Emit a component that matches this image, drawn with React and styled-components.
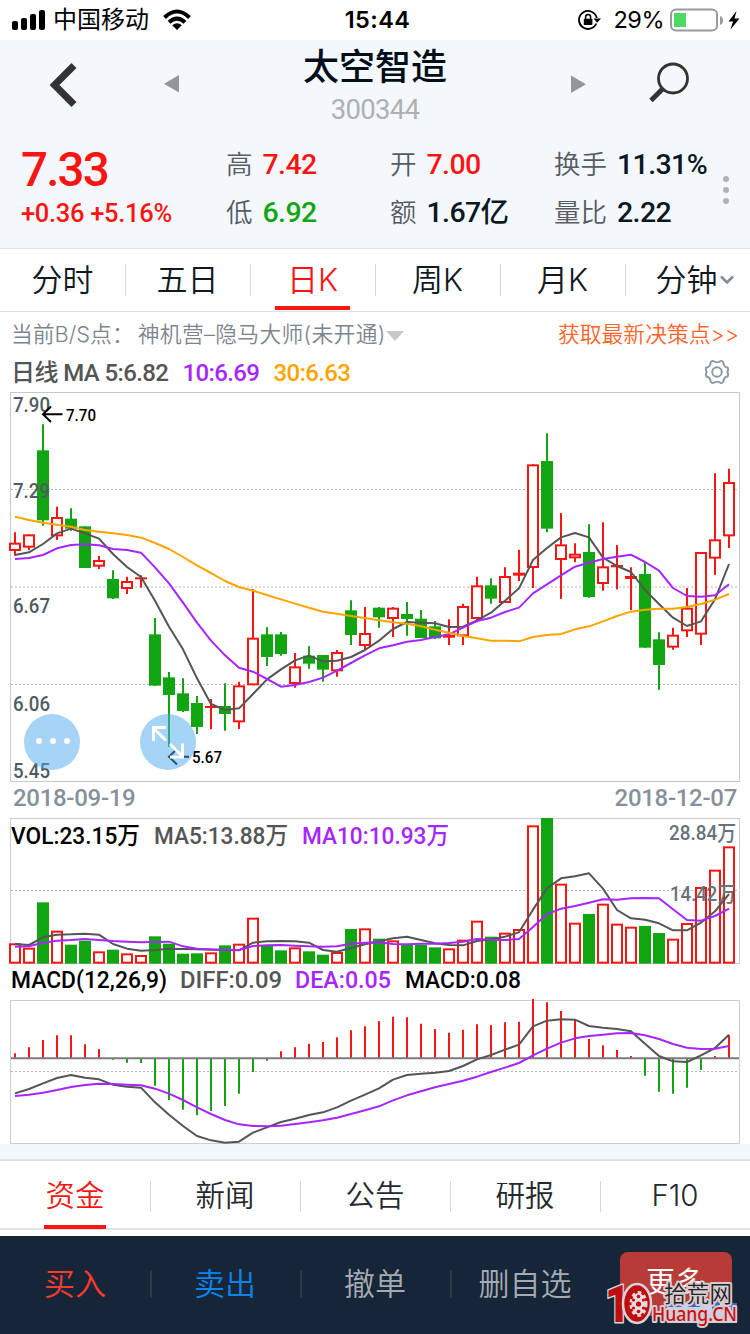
import React from "react";
import styled, { createGlobalStyle } from "styled-components";

const RED = "#f81612";
const GREEN = "#12a512";
const PURPLE = "#a626ff";
const ORANGE = "#ffa300";
const GREY = "#555";
const DIN = `Roboto, "Noto Sans CJK SC", sans-serif`;

const GlobalStyle = createGlobalStyle`
  * {
    box-sizing: border-box;
    margin: 0;
    padding: 0;
  }
  body {
    width: 750px;
    height: 1334px;
    overflow: hidden;
    background: #fff;
    font-family: Inter, "Noto Sans CJK SC", sans-serif;
    line-height: 1.2;
    color: #101923;
  }
  svg {
    display: block;
    flex-shrink: 0;
  }
`;

const Page = styled.div`
  position: relative;
  display: flex;
  flex-direction: column;
  width: 750px;
  height: 1334px;
  overflow: hidden;
`;

const StatusBar = styled.div`
  display: grid;
  grid-template-columns: 1fr auto 1fr;
  align-items: center;
  height: 40px;
  padding: 0 9px 0 12px;
  color: #000;
  font-size: 24px;
`;

const StatusSide = styled.div`
  display: flex;
  align-items: center;
  justify-content: ${(p) => (p.$end ? "flex-end" : "flex-start")};
`;

const Carrier = styled.span`
  margin: 0 13px 0 7px;
  font-weight: 400;
`;

const Clock = styled.span`
  font-weight: 600;
  font-size: 23.5px;
  letter-spacing: 0.4px;
  padding-left: 2px;
`;

const Percent = styled.span`
  margin: 0 6px 0 13px;
  font-size: 23.5px;
  letter-spacing: -0.5px;
`;

const Header = styled.header`
  height: 209px;
  background: #f4f8fc;
  border-bottom: 1px solid #dfe5ea;
`;

const TitleRow = styled.div`
  display: grid;
  grid-template-columns: 164px 422px 164px;
  height: 88px;
`;

const TitleCenter = styled.div`
  display: flex;
  justify-content: space-between;
`;

const TitleText = styled.div`
  text-align: center;
`;

const StockName = styled.h1`
  height: 54px;
  line-height: 54px;
  font-size: 36px;
  font-weight: 500;
  color: #020f1b;
`;

const StockCode = styled.div`
  height: 30px;
  line-height: 31px;
  font-family: ${DIN};
  font-size: 27.5px;
  letter-spacing: -0.7px;
  color: #adb1b5;
`;

const QuoteRow = styled.div`
  display: grid;
  grid-template-columns: 205px 164px 164px 161px 1fr;
  height: 100px;
  padding-left: 21px;
  margin-top: 13px;
`;

const PriceBlock = styled.div`
  padding-top: 1px;
  color: ${RED};
  font-family: ${DIN};
`;

const Price = styled.div`
  height: 56px;
  line-height: 56px;
  font-size: 47.5px;
  font-weight: 500;
  letter-spacing: -1.8px;
`;

const Change = styled.div`
  height: 32px;
  line-height: 31px;
  font-size: 25.5px;
  font-weight: 500;
  letter-spacing: -0.3px;
`;

const QuoteColumn = styled.div`
  display: grid;
  grid-template-rows: 48px 48px;
`;

const Quote = styled.div`
  display: flex;
  align-items: center;
  white-space: nowrap;
`;

const QuoteLabel = styled.span`
  margin-right: 10px;
  font-size: 26.5px;
  font-weight: 350;
  color: #555c64;
`;

const QuoteValue = styled.span`
  font-family: ${DIN};
  font-size: 28.5px;
  font-weight: 500;
  letter-spacing: -0.6px;
  color: ${(p) => p.$color || "#0a1824"};
`;

const MoreDots = styled.div`
  display: flex;
  flex-direction: column;
  gap: 5px;
  padding: 35px 0 0 8px;
  i {
    width: 6px;
    height: 6px;
    border-radius: 50%;
    background: #abb2b8;
  }
`;

const Tabs = styled.nav`
  display: grid;
  grid-template-columns: repeat(6, 125px);
  height: 63px;
  border-bottom: 1px solid #dfe1e3;
`;

const Tab = styled.div`
  display: flex;
  align-items: center;
  justify-content: center;
  height: 62px;
  font-size: 31px;
  font-weight: 350;
  color: ${(p) => (p.$active ? RED : "#101923")};
  background:
    linear-gradient(${RED}, ${RED}) 50% 57px / ${(p) => (p.$active ? "75px 4px" : "0 0")} no-repeat,
    linear-gradient(#d5d9dd, #d5d9dd) 0 15px / ${(p) => (p.$first ? "0 0" : "1px 32px")} no-repeat;
  svg {
    margin: 0 -14px 0 2px;
  }
`;

const SignalRow = styled.div`
  display: flex;
  align-items: center;
  height: 44px;
  padding: 0 11px;
  font-size: 21.8px;
  font-weight: 350;
  color: #7c858d;
  white-space: nowrap;
  svg {
    margin-top: 4px;
  }
`;

const SignalName = styled.span`
  margin-left: 4px;
  letter-spacing: 0.3px;
`;

const SignalLink = styled.span`
  margin-left: auto;
  font-weight: 350;
  color: #ff6429;
`;

const AverageRow = styled.div`
  display: flex;
  align-items: center;
  height: 34px;
  padding: 0 20px 0 11px;
  font-family: ${DIN};
  font-size: 24px;
  font-weight: 500;
  svg {
    margin: 0 0 2px auto;
  }
`;

const Average = styled.span`
  margin-right: 14px;
  letter-spacing: -0.6px;
  color: ${(p) => p.$color};
`;

const ChartArea = styled.div`
  position: relative;
  height: 393px;
`;

const FloatButton = styled.div`
  position: absolute;
  left: ${(p) => p.$left}px;
  top: 324px;
  width: 56px;
  height: 56px;
  border-radius: 50%;
  background: rgba(77, 169, 237, 0.5);
`;

const DateRow = styled.div`
  display: flex;
  justify-content: space-between;
  height: 34px;
  line-height: 30px;
  padding: 0 13px;
  font-family: ${DIN};
  font-size: 24px;
  font-weight: 500;
  color: #87919a;
  letter-spacing: -0.3px;
`;

const Gap = styled.div`
  height: 17px;
  background: #f4f8fb;
  border-bottom: 2px solid #dfe4e8;
`;

const InfoTabs = styled.nav`
  display: grid;
  grid-template-columns: repeat(5, 150px);
  height: 69px;
  border-bottom: 2px solid #dfe4e8;
`;

const InfoTab = styled.div`
  display: flex;
  align-items: center;
  justify-content: center;
  height: 69px;
  font-size: 29.5px;
  font-weight: 350;
  color: ${(p) => (p.$active ? RED : "#25292e")};
  background:
    linear-gradient(${RED}, ${RED}) 50% 64px / ${(p) => (p.$active ? "62px 4px" : "0 0")} no-repeat,
    linear-gradient(#d5d9dd, #d5d9dd) 0 20px / ${(p) => (p.$first ? "0 0" : "1px 31px")} no-repeat;
`;

const TradeBar = styled.footer`
  display: grid;
  grid-template-columns: repeat(5, 150px);
  height: 98px;
  margin-top: 6px;
  background: #172538;
`;

const Trade = styled.div`
  display: flex;
  align-items: center;
  justify-content: center;
  padding-bottom: 2px;
  font-size: 31px;
  font-weight: 350;
  color: ${(p) => p.$color};
  background: linear-gradient(#2b394a, #2b394a) 0 34px / ${(p) => (p.$line ? "2px 28px" : "0 0")} no-repeat;
`;

const MoreButton = styled.div`
  width: 112px;
  height: 64px;
  margin: 16px 0 0 20px;
  padding-right: 2px;
  border-radius: 8px;
  background: #b93b37;
  color: #fff;
  font-size: 29px;
  line-height: 62px;
  text-align: center;
`;

const Watermark = styled.div`
  position: absolute;
  right: 5px;
  bottom: 0;
`;

// kind, high, body top, body bottom, low, volume top, macd end (thirds of a pixel)
const candles = [
  ["r", 427, 458, 483, 497, 490, 820], ["r", 433, 433, 473, 480, 503, 802], ["g", 103, 181, 391, 407, 367, 780],
  ["r", 350, 381, 439, 450, 452, 766], ["g", 355, 386, 416, 422, 494, 766], ["g", 409, 409, 534, 534, 482, 793],
  ["r", 498, 510, 530, 537, 514, 807], ["g", 541, 567, 625, 627, 509, 839], ["r", 560, 573, 597, 612, 520, 848],
  ["r", 556, 562, 568, 593, 525, 849], ["g", 684, 733, 887, 887, 469, 917], ["g", 846, 862, 915, 1070, 491, 960],
  ["g", 865, 910, 963, 966, 521, 989], ["g", 918, 939, 1011, 1032, 520, 1006], ["r", 927, 948, 954, 1018, 517, 993],
  ["g", 880, 948, 972, 1022, 496, 978], ["r", 875, 886, 997, 1017, 491, 941], ["r", 598, 743, 886, 886, 413, 876],
  ["g", 712, 733, 801, 828, 496, 842], ["g", 726, 733, 792, 797, 511, 814], ["r", 789, 829, 882, 893, 502, 802],
  ["g", 769, 797, 821, 836, 514, 791], ["g", 795, 795, 839, 875, 524, 786], ["r", 780, 786, 844, 860, 516, 772],
  ["g", 631, 661, 735, 765, 447, 751], ["r", 651, 729, 768, 779, 445, 739], ["g", 651, 653, 682, 713, 476, 723],
  ["r", 651, 653, 687, 741, 481, 710], ["g", 636, 672, 687, 737, 494, 712], ["g", 660, 686, 744, 744, 494, 731],
  ["g", 693, 709, 745, 747, 502, 747], ["r", 688, 735, 743, 765, 505, 758], ["r", 641, 648, 739, 765, 479, 749],
  ["r", 560, 586, 687, 697, 422, 733], ["g", 565, 586, 626, 641, 470, 735], ["r", 532, 558, 639, 639, 458, 727],
  ["r", 479, 548, 557, 573, 447, 725], ["r", 223, 223, 534, 594, 136, 657], ["g", 130, 213, 416, 427, 114, 667],
  ["r", 369, 463, 510, 627, 311, 693], ["r", 460, 491, 505, 517, 428, 720], ["g", 403, 486, 621, 623, 402, 777],
  ["r", 397, 529, 582, 602, 371, 796], ["r", 465, 525, 532, 598, 431, 810], ["r", 532, 558, 567, 660, 440, 828],
  ["g", 516, 552, 773, 773, 438, 887], ["g", 727, 748, 825, 899, 459, 935], ["r", 713, 734, 773, 779, 476, 941],
  ["r", 594, 653, 724, 741, 429, 923], ["r", 486, 486, 734, 765, 321, 870], ["r", 250, 448, 506, 555, 269, 828],
  ["r", 236, 276, 439, 474, 199, 766],
];

const ma5 = [495, 487, 462, 430, 416, 430, 446, 492, 531, 561, 632, 710, 778, 865, 942, 960, 955, 912, 868, 838, 811, 797, 814, 812, 801, 780, 752, 717, 696, 698, 700, 711, 710, 691, 668, 632, 595, 510, 474, 442, 429, 442, 503, 528, 546, 600, 642, 683, 708, 694, 628, 522];
const ma10 = [507, 504, 495, 475, 465, 463, 466, 477, 480, 488, 532, 580, 638, 698, 752, 796, 833, 845, 867, 890, 885, 876, 863, 842, 819, 796, 775, 766, 755, 750, 741, 733, 713, 693, 683, 666, 653, 610, 583, 556, 530, 518, 507, 500, 494, 516, 542, 594, 618, 620, 616, 583];
const ma30 = [380, 390, 398, 404, 410, 420, 425, 430, 435, 443, 459, 477, 501, 526, 549, 573, 591, 602, 615, 628, 641, 653, 665, 671, 678, 684, 691, 697, 701, 709, 719, 728, 738, 745, 752, 752, 754, 741, 735, 732, 718, 709, 694, 678, 665, 659, 656, 656, 651, 642, 629, 612];
const vol5 = [492, 495, 472, 464, 463, 461, 464, 492, 506, 512, 510, 506, 507, 508, 509, 510, 511, 488, 484, 483, 484, 488, 510, 515, 504, 493, 484, 475, 470, 480, 490, 495, 496, 483, 478, 470, 457, 389, 325, 295, 289, 280, 326, 390, 415, 419, 430, 451, 451, 428, 394, 342];
const vol10 = [500, 499, 488, 482, 480, 477, 480, 483, 485, 487, 486, 485, 499, 506, 508, 509, 510, 498, 496, 495, 497, 499, 500, 499, 491, 488, 487, 492, 493, 491, 491, 489, 485, 477, 479, 480, 477, 441, 403, 386, 378, 368, 358, 359, 355, 354, 355, 388, 420, 422, 408, 386];
const diff = [940, 927, 910, 894, 885, 893, 898, 914, 920, 923, 967, 1004, 1038, 1068, 1081, 1088, 1085, 1058, 1042, 1026, 1016, 1005, 997, 982, 962, 944, 925, 899, 885, 881, 878, 873, 858, 838, 825, 809, 794, 739, 722, 718, 719, 738, 743, 747, 754, 791, 828, 844, 846, 826, 804, 764];
const dea = [948, 944, 938, 930, 921, 915, 911, 912, 914, 916, 926, 941, 960, 982, 1002, 1020, 1033, 1038, 1039, 1037, 1032, 1027, 1021, 1013, 1002, 991, 979, 961, 946, 934, 922, 912, 902, 890, 876, 863, 849, 826, 806, 788, 775, 768, 764, 760, 759, 766, 777, 792, 803, 807, 806, 798];

const px = (i) => 15 + 14 * i;

const Curve = ({ data, color }) => (
  <polyline
    points={data.map((v, i) => `${px(i)},${v / 3}`).join(" ")}
    fill="none"
    stroke={color}
    strokeWidth="2"
    strokeLinejoin="round"
  />
);

const Bar = ({ kind, i, top, bottom }) => {
  const y = top / 3;
  const h = (bottom - top) / 3;
  if (kind === "g") return <rect x={px(i) - 6} y={y} width="12" height={h} fill={GREEN} />;
  if (h < 4) return <rect x={px(i) - 6} y={y} width="12" height={h} fill={RED} />;
  return <rect x={px(i) - 5} y={y + 1} width="10" height={h - 2} fill="#fff" stroke={RED} strokeWidth="2" />;
};

const Label = ({ x, y, w, size = 20, color = "#515a62", children }) => (
  <text
    x={x}
    y={y}
    textLength={w}
    lengthAdjust="spacingAndGlyphs"
    fontFamily={DIN}
    fontSize={size}
    fontWeight="500"
    fill={color}
  >
    {children}
  </text>
);

const Grid = ({ y }) => <path d={`M11 ${y}H739`} stroke="#b4b9be" strokeDasharray="2 2" />;

const PriceChart = () => (
  <svg width="750" height="393" viewBox="0 0 750 393">
    <rect x="10.5" y="2.5" width="729" height="389" fill="#fff" stroke="#c3c9ce" />
    <Grid y={99.5} />
    <Grid y={197} />
    <Grid y={294.5} />
    {candles.map(([kind, high, top, bottom, low], i) => (
      <g key={i}>
        <path d={`M${px(i)} ${high / 3}V${low / 3}`} stroke={kind === "r" ? RED : GREEN} strokeWidth="2" />
        <Bar kind={kind} i={i} top={top} bottom={bottom} />
      </g>
    ))}
    <Curve data={ma5} color={GREY} />
    <Curve data={ma10} color={PURPLE} />
    <Curve data={ma30} color={ORANGE} />
    <Label x={13} y={22} w={37}>7.90</Label>
    <Label x={13} y={107.5} w={37}>7.29</Label>
    <Label x={13} y={223} w={37}>6.67</Label>
    <Label x={13} y={320.5} w={37}>6.06</Label>
    <Label x={13} y={388} w={37}>5.45</Label>
    <path d="M62.5 24.3H43M51 16.5L43 24.3L51 32" fill="none" stroke="#000" strokeWidth="2" />
    <Label x={66} y={31} w={30} size={16.5} color="#000">7.70</Label>
    <path d="M189 366.8H169M177 359L169 366.8L177 374.5" fill="none" stroke="#000" strokeWidth="2" />
    <Label x={192} y={373.3} w={30} size={16.5} color="#000">5.67</Label>
  </svg>
);

const VolumeChart = () => (
  <svg width="750" height="148" viewBox="0 37 750 148">
    <rect x="10.5" y="38.5" width="729" height="145" fill="#fff" stroke="#c9cfd4" />
    <Grid y={110.5} />
    <Label x={669} y={59.5} w={67} size={21} color="#69727a">28.84万</Label>
    {candles.map(([kind, , , , , vol], i) => (
      <Bar key={i} kind={kind} i={i} top={vol} bottom={551} />
    ))}
    <Label x={670} y={120.5} w={66} size={21} color="#69727a">14.42万</Label>
    <Curve data={vol5} color={GREY} />
    <Curve data={vol10} color={PURPLE} />
    <Label x={11} y={63.5} w={129} size={24} color="#000">VOL:23.15万</Label>
    <Label x={154} y={63.5} w={134} size={24} color={GREY}>MA5:13.88万</Label>
    <Label x={302} y={63.5} w={147} size={24} color={PURPLE}>MA10:10.93万</Label>
  </svg>
);

const MacdChart = () => (
  <svg width="750" height="179" viewBox="0 185 750 179">
    <Label x={11} y={207.5} w={156} size={24} color="#000">MACD(12,26,9)</Label>
    <Label x={180} y={207.5} w={102} size={24} color={GREY}>DIFF:0.09</Label>
    <Label x={295} y={207.5} w={96} size={24} color={PURPLE}>DEA:0.05</Label>
    <Label x={405} y={207.5} w={116} size={24} color="#000">MACD:0.08</Label>
    <rect x="10.5" y="220.5" width="729" height="143" fill="#fff" stroke="#c9cfd4" />
    <Grid y={291.5} />
    {candles.map((c, i) => (
      <path key={i} d={`M${px(i)} 278V${c[6] / 3}`} stroke={c[6] < 834 ? RED : GREEN} strokeWidth="2" />
    ))}
    <path d="M11 278.2H739" stroke="#7c7c7c" strokeWidth="2" />
    <Curve data={diff} color={GREY} />
    <Curve data={dea} color={PURPLE} />
  </svg>
);

const Signal = () => (
  <svg width="34" height="20" viewBox="0 0 34 20">
    <rect x="0" y="11" width="6" height="9" rx="2" />
    <rect x="9" y="8" width="6" height="12" rx="2" />
    <rect x="18" y="4" width="6" height="16" rx="2" />
    <rect x="27" y="0" width="6" height="20" rx="2" />
  </svg>
);

const Wifi = () => (
  <svg width="30" height="22" viewBox="0 0 30 22">
    <g fill="none" stroke="#000" strokeWidth="4">
      <path d="M2.5 8.5Q15-3.5 27.5 8.5" />
      <path d="M7 13.3Q15 5.8 23 13.3" />
    </g>
    <path d="M15 21L10.2 16.3Q15 12 19.8 16.3Z" />
  </svg>
);

const RotationLock = () => (
  <svg width="24" height="22" viewBox="0 0 24 22">
    <path d="M19.3 14.5A9 9 0 1 1 19.8 9" fill="none" stroke="#000" strokeWidth="1.8" />
    <path d="M16.5 9.5H24L20.2 13.8Z" />
    <rect x="6.8" y="9.8" width="8.6" height="6.2" rx="0.8" />
    <path d="M8.6 10.500V8a2.500 2.500 0 0 1 5 0V10.500" fill="none" stroke="#000" strokeWidth="1.5" />
  </svg>
);

const Battery = () => (
  <svg width="71" height="24" viewBox="0 0 71 24">
    <rect x="1" y="1.5" width="46" height="21" rx="5" fill="none" stroke="#9a9a9a" strokeWidth="2" />
    <rect x="4" y="5" width="12" height="14" fill="#4cd964" />
    <path d="M50 8q3 1 3 4.5t-3 4.5z" fill="#9a9a9a" />
    <path d="M66.5 3L58.5 13.5H63L60.5 21.5L69.5 10.5H64.5Z" />
  </svg>
);

const BackArrow = () => (
  <svg width="164" height="88" viewBox="0 40 164 88">
    <path d="M74 65.5L54.5 85L74 104.5" fill="none" stroke="#333" strokeWidth="7" />
  </svg>
);

const SearchIcon = () => (
  <svg width="164" height="88" viewBox="586 40 164 88">
    <circle cx="673" cy="78.5" r="14.5" fill="none" stroke="#333" strokeWidth="2.8" />
    <path d="M663 88.5L651 100.5" stroke="#333" strokeWidth="5" />
  </svg>
);

const Triangle = ({ right }) => (
  <svg width="15" height="88" viewBox="0 0 15 88">
    <path d={right ? "M0 35.5L15 44.3L0 53Z" : "M15 35L0 43.7L15 52.5Z"} fill="#93979b" />
  </svg>
);

const SettingsIcon = () => (
  <svg width="26" height="26" viewBox="0 0 26 26" fill="none" stroke="#8b97a5" strokeWidth="1.9">
    <path d="M6.7 3.2Q8.5 1 10.3 2.5Q13 4.3 15.7 2.5Q17.5 1 19.3 3.2Q19.5 7.8 23.5 8.5Q25 10 23.3 13Q25 16 23.5 17.5Q19.5 18.2 19.3 22.8Q17.5 25 15.7 23.5Q13 21.7 10.3 23.5Q8.5 25 6.7 22.8Q6.5 18.2 2.5 17.5Q1 16 2.700 13Q1 10 2.5 8.5Q6.5 7.8 6.7 3.2Z" strokeLinejoin="round" />
    <circle cx="13" cy="13" r="4.8" />
  </svg>
);

const SiteMark = () => (
  <svg width="142" height="54" viewBox="603 1280 142 54">
    <path d="M667 1303h70v20h-70z" fill="#c6d3ec" />
    <path d="M668 1304h14v3h-14zM688 1303h12v4h-12zM712 1302h8v7h-8zM725 1303h12v8h-6v-4h-6zM731 1313h6v8h-6zM670 1318h12v3h-12zM694 1318h10v3h-10z" fill="#3568c8" />
    <g stroke="#d8cbce" strokeLinejoin="round" paintOrder="stroke">
      <text x="664" y="1302" fontSize="22.5" textLength="68" fontFamily="Noto Sans CJK SC, sans-serif" strokeWidth="4" fontWeight="350" fill="#222">拾荒网</text>
      <text x="652" y="1321" fontSize="19.5" fontWeight="500" textLength="85" lengthAdjust="spacingAndGlyphs" fontFamily="Noto Sans, sans-serif" strokeWidth="4" fill="#c81018">Huang.CN</text>
    </g>
    <text x="605" y="1322" fontSize="51" fontWeight="900" textLength="25" lengthAdjust="spacingAndGlyphs" fontFamily="Roboto, sans-serif" fill="#c00d10" stroke="#d3d5da" strokeWidth="3" paintOrder="stroke">1</text>
    <ellipse cx="637" cy="1303.5" rx="14" ry="19.5" fill="#c00d10" stroke="#d3d5da" strokeWidth="2.5" />
    <ellipse cx="638.5" cy="1304" rx="7" ry="11" fill="#eadadd" stroke="#eadadd" strokeWidth="4" strokeDasharray="3.2 2.8" />
    <g fill="#c00d10">
      <circle cx="638.5" cy="1304" r="2.6" />
      <circle cx="638.5" cy="1296.5" r="1.8" />
      <circle cx="638.5" cy="1311.5" r="1.8" />
      <circle cx="633.5" cy="1300" r="1.6" />
      <circle cx="643.5" cy="1300" r="1.6" />
      <circle cx="633.5" cy="1308" r="1.6" />
      <circle cx="643.5" cy="1308" r="1.6" />
    </g>
  </svg>
);

const quotes = [
  [["高", "7.42", RED], ["低", "6.92", GREEN]],
  [["开", "7.00", RED], ["额", "1.67亿"]],
  [["换手", "11.31%"], ["量比", "2.22"]],
];

const periods = ["分时", "五日", "日K", "周K", "月K", "分钟"];
const infoTabs = ["资金", "新闻", "公告", "研报", "F10"];
const trades = [["买入", "#ff3b30"], ["卖出", "#0a84e8"], ["撤单", "#a4abb3"], ["删自选", "#a4abb3"]];

const App = () => (
  <Page>
    <GlobalStyle />
    <StatusBar>
      <StatusSide>
        <Signal />
        <Carrier>中国移动</Carrier>
        <Wifi />
      </StatusSide>
      <Clock>15:44</Clock>
      <StatusSide $end>
        <RotationLock />
        <Percent>29%</Percent>
        <Battery />
      </StatusSide>
    </StatusBar>

    <Header>
      <TitleRow>
        <BackArrow />
        <TitleCenter>
          <Triangle />
          <TitleText>
            <StockName>太空智造</StockName>
            <StockCode>300344</StockCode>
          </TitleText>
          <Triangle right />
        </TitleCenter>
        <SearchIcon />
      </TitleRow>
      <QuoteRow>
        <PriceBlock>
          <Price>7.33</Price>
          <Change>+0.36 +5.16%</Change>
        </PriceBlock>
        {quotes.map((column, i) => (
          <QuoteColumn key={i}>
            {column.map(([label, value, color]) => (
              <Quote key={label}>
                <QuoteLabel>{label}</QuoteLabel>
                <QuoteValue $color={color}>{value}</QuoteValue>
              </Quote>
            ))}
          </QuoteColumn>
        ))}
        <MoreDots>
          <i />
          <i />
          <i />
        </MoreDots>
      </QuoteRow>
    </Header>

    <Tabs>
      {periods.map((name, i) => (
        <Tab key={name} $first={i === 0} $active={i === 2}>
          {name}
          {i === 5 && (
            <svg width="14" height="12" viewBox="0 0 14 12">
              <path d="M1 2.5L7 8.5L13 2.5" fill="none" stroke="#848d95" strokeWidth="2.6" />
            </svg>
          )}
        </Tab>
      ))}
    </Tabs>

    <SignalRow>
      <span>当前B/S点：</span>
      <SignalName>神机营–隐马大师(未开通)</SignalName>
      <svg width="18" height="10" viewBox="0 0 18 10">
        <path d="M0 0H18L9 10Z" fill="#c8c8c8" />
      </svg>
      <SignalLink>获取最新决策点&gt;&gt;</SignalLink>
    </SignalRow>

    <AverageRow>
      <Average $color={GREY}>日线 MA 5:6.82</Average>
      <Average $color={PURPLE}>10:6.69</Average>
      <Average $color={ORANGE}>30:6.63</Average>
      <SettingsIcon />
    </AverageRow>

    <ChartArea>
      <PriceChart />
      <FloatButton $left={24}>
        <svg width="56" height="56" viewBox="0 0 56 56" fill="#fff">
          <circle cx="15" cy="27" r="3" />
          <circle cx="29" cy="27" r="3" />
          <circle cx="43" cy="27" r="3" />
        </svg>
      </FloatButton>
      <FloatButton $left={140}>
        <svg width="56" height="56" viewBox="0 0 56 56" fill="none" stroke="#fff" strokeWidth="3">
          <path d="M26 26.5L13.5 14M13.5 27V13.5H26" />
          <path d="M30 30L42.5 42.5M42.5 29.5V43H30" />
        </svg>
      </FloatButton>
    </ChartArea>
    <DateRow>
      <span>2018-09-19</span>
      <span>2018-12-07</span>
    </DateRow>
    <VolumeChart />
    <MacdChart />
    <Gap />

    <InfoTabs>
      {infoTabs.map((name, i) => (
        <InfoTab key={name} $first={i === 0} $active={i === 0}>
          {name}
        </InfoTab>
      ))}
    </InfoTabs>

    <TradeBar>
      {trades.map(([name, color], i) => (
        <Trade key={name} $color={color} $line={i > 0}>
          {name}
        </Trade>
      ))}
      <MoreButton>更多</MoreButton>
    </TradeBar>
    <Watermark>
      <SiteMark />
    </Watermark>
  </Page>
);

export default App;
